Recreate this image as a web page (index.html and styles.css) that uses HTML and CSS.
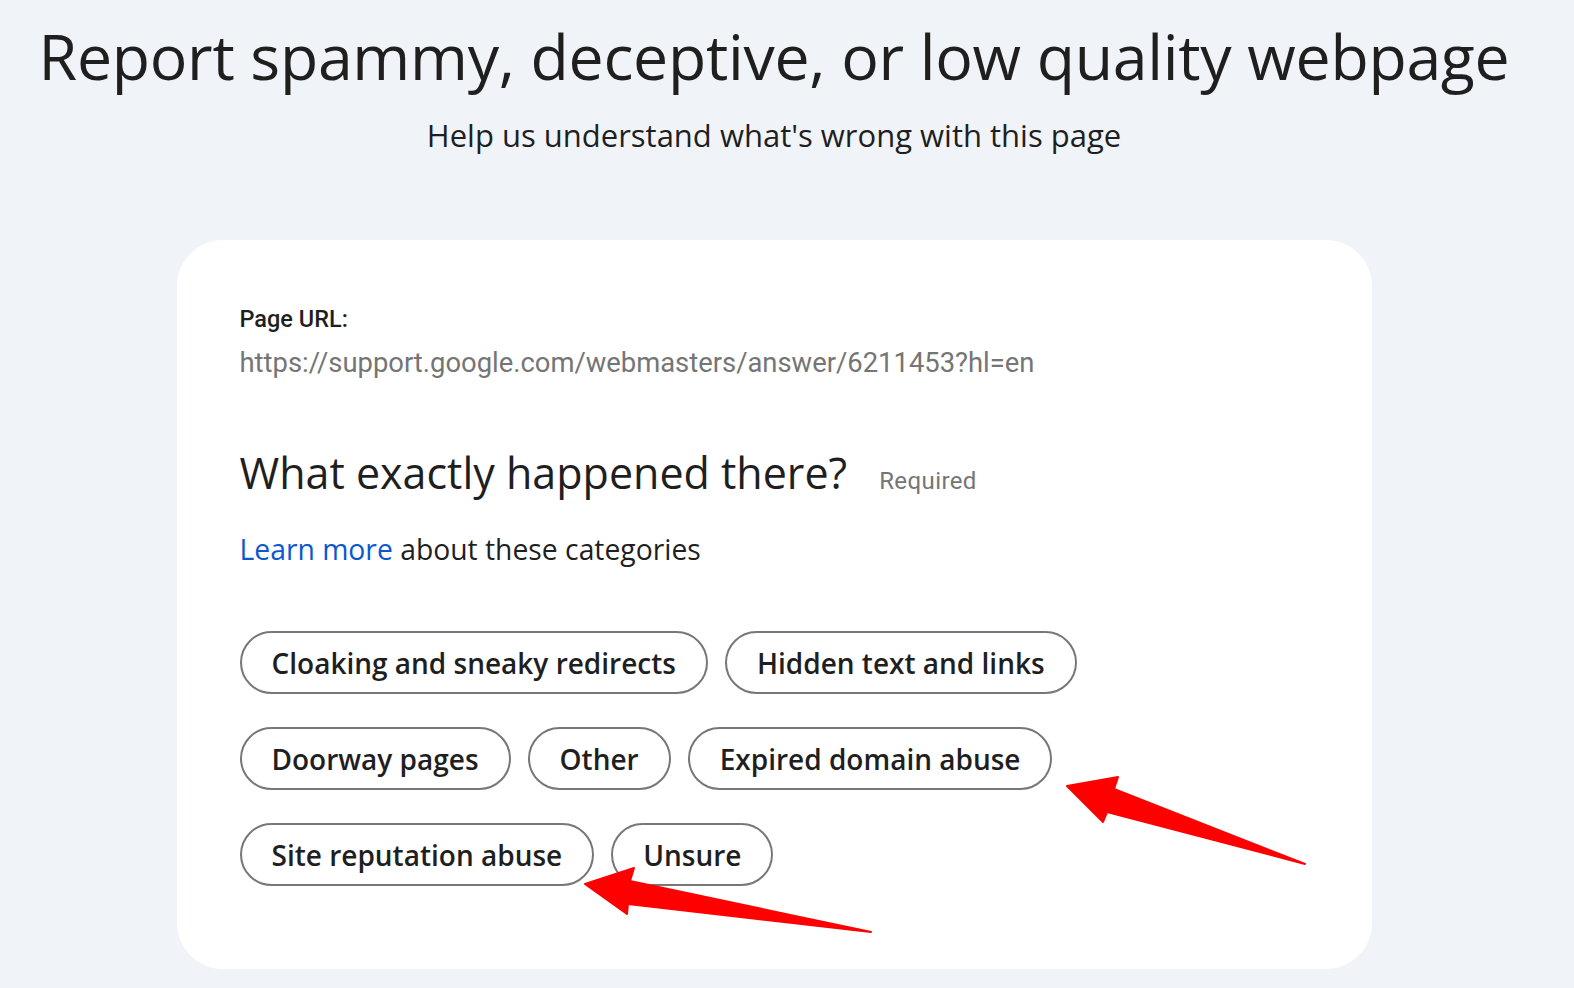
FILE: index.html
```html
<!DOCTYPE html>
<html lang="en">
<head>
    <meta charset="UTF-8">
    <meta name="viewport" content="width=device-width, initial-scale=1.0">
    <title>Report spammy, deceptive, or low quality webpage</title>
    <link rel="stylesheet" href="styles.css">
</head>
<body>
<main class="page">
    <header class="top">
        <h1 class="title">Report spammy, deceptive, or low quality webpage</h1>
        <p class="subtitle">Help us understand what's wrong with this page</p>
    </header>

    <section class="card">
        <div class="url-block">
            <p class="url-label">Page URL:</p>
            <p class="url">https://support.google.com/webmasters/answer/6211453?hl=en</p>
        </div>

        <div class="question">
            <h2>What exactly happened there?</h2>
            <span class="required">Required</span>
        </div>

        <p class="learn"><a href="#">Learn more</a> about these categories</p>

        <div class="chips">
            <div class="chip-row">
                <button class="chip">Cloaking and sneaky redirects</button>
                <button class="chip">Hidden text and links</button>
            </div>
            <div class="chip-row">
                <button class="chip">Doorway pages</button>
                <button class="chip">Other</button>
                <button class="chip">Expired domain abuse</button>
            </div>
            <div class="chip-row">
                <button class="chip">Site reputation abuse</button>
                <button class="chip">Unsure</button>
            </div>
        </div>
    </section>
</main>

<svg class="marks" width="1574" height="988" viewBox="0 0 1574 988">
    <polygon fill="#ff0000" stroke="#ff0000" stroke-width="2" stroke-linejoin="round"
        points="1067,786 1118,777 1114,789 1305,864 1107,812 1103,822"/>
    <polygon fill="#ff0000" stroke="#ff0000" stroke-width="2" stroke-linejoin="round"
        points="585,884 634,868 630,881 871,932 628,904 627,914"/>
</svg>
</body>
</html>
```

FILE: styles.css
```css
* {
    margin: 0;
    padding: 0;
    box-sizing: border-box;
}

body {
    background-color: #f0f4f9;
    color: #1f1f1f;
    font-family: "Open Sans", "Noto Sans", sans-serif;
    width: 1574px;
    height: 988px;
    overflow: hidden;
}

.page {
    width: 1548px;
    display: flex;
    flex-direction: column;
    align-items: center;
}

.top {
    text-align: center;
    padding-top: 16px;
}

.title {
    font-weight: 400;
    font-size: 62.6px;
    line-height: 80px;
    letter-spacing: -0.3px;
}

.subtitle {
    font-size: 31px;
    line-height: 42px;
    margin-top: 18px;
}

.card {
    margin-top: 84px;
    width: 1195px;
    height: 729px;
    background-color: #ffffff;
    border-radius: 46px;
    padding: 63px 63px 0;
}

.url-label {
    font-family: Roboto, "Liberation Sans", sans-serif;
    font-weight: 500;
    font-size: 23.5px;
    line-height: 32px;
}

.url {
    font-family: Roboto, "Liberation Sans", sans-serif;
    font-size: 27.4px;
    line-height: 36px;
    color: #757575;
    margin-top: 10px;
}

.question {
    display: flex;
    align-items: baseline;
    gap: 32px;
    margin-top: 64px;
}

.question h2 {
    font-weight: 400;
    font-size: 43px;
    line-height: 56px;
}

.required {
    font-family: Roboto, "Liberation Sans", sans-serif;
    font-size: 24px;
    color: #757575;
    letter-spacing: 0.4px;
}

.learn {
    font-size: 28.3px;
    line-height: 40px;
    margin-top: 28px;
}

.learn a {
    color: #0b57d0;
    text-decoration: none;
}

.chips {
    display: flex;
    flex-direction: column;
    gap: 33px;
    margin-top: 62px;
}

.chip-row {
    display: flex;
    gap: 17px;
}

.chip {
    font-family: "Open Sans", "Noto Sans", sans-serif;
    font-size: 28px;
    font-weight: 600;
    color: #1f1f1f;
    background: #ffffff;
    border: 2px solid #777777;
    border-radius: 32px;
    height: 63px;
    padding: 0 30px;
}

.marks {
    position: absolute;
    left: 0;
    top: 0;
    pointer-events: none;
}
```
